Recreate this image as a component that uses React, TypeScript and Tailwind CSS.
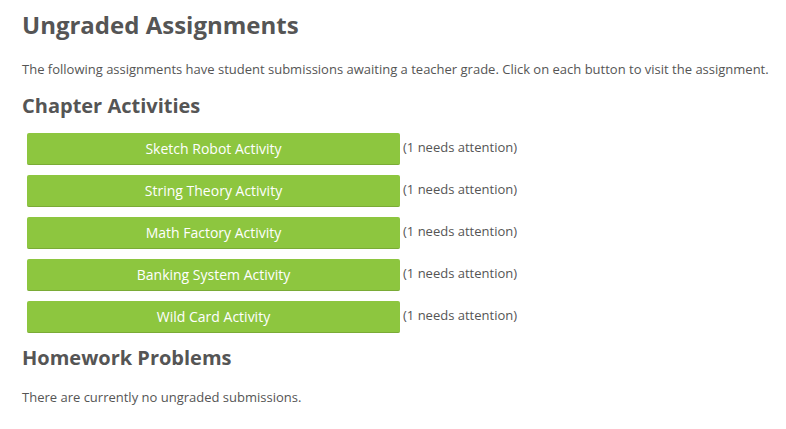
export default function App() {
  const items = [
    "Sketch Robot Activity",
    "String Theory Activity",
    "Math Factory Activity",
    "Banking System Activity",
    "Wild Card Activity",
  ];
  return (
    <div className="bg-white min-h-[429px] px-[22px] pt-[10px] text-[#555]" style={{ fontFamily: '"Open Sans", sans-serif' }}>
      <h1 className="text-[24px] font-bold leading-[30px] m-0">Ungraded Assignments</h1>
      <p className="text-[13px] leading-[20px] mt-[19px] whitespace-nowrap">
        The following assignments have student submissions awaiting a teacher grade. Click on each button to visit the assignment.
      </p>
      <h2 className="text-[20px] font-bold leading-[26px] mt-[14px]">Chapter Activities</h2>
      <div className="flex flex-col gap-[10px] mt-[14px] pl-[5px]">
        {items.map((t) => (
          <div key={t} className="flex items-center">
            <button className="w-[373px] h-[32px] bg-[#8dc63f] text-white text-[14px] rounded-[2px] border-b border-[#7aab36] cursor-pointer">
              {t}
            </button>
            <span className="text-[13px] ml-[3px] -mt-[2px]">(1 needs attention)</span>
          </div>
        ))}
      </div>
      <h2 className="text-[20px] font-bold leading-[26px] mt-[12px]">Homework Problems</h2>
      <p className="text-[13px] leading-[20px] mt-[16px]">There are currently no ungraded submissions.</p>
    </div>
  );
}
